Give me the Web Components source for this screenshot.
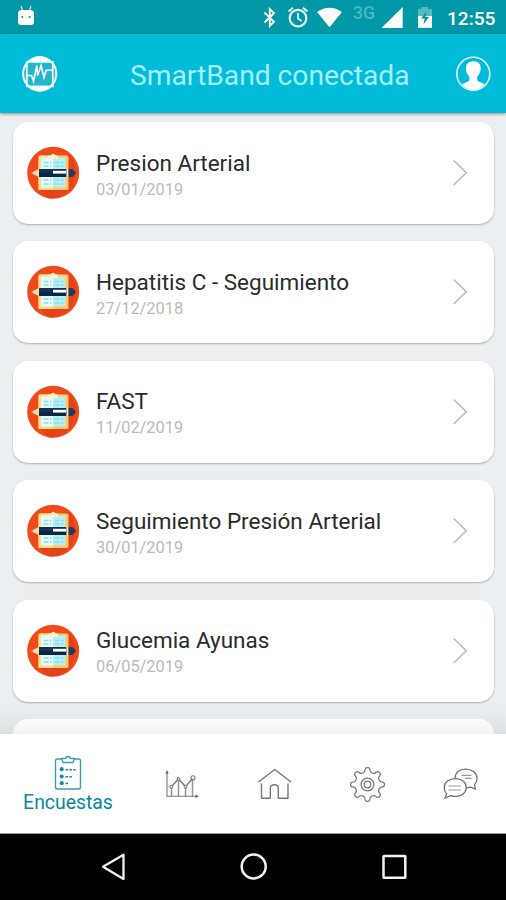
<!DOCTYPE html>
<html lang="es">
<head>
<meta charset="utf-8">
<title>SmartBand</title>
<style>
body{margin:0;font-family:Roboto,"Liberation Sans",sans-serif}
</style>
</head>
<body>
<smart-app></smart-app>
<script>
const define = (name, html) => customElements.define(name, class extends HTMLElement {
  connectedCallback() {
    if (this.shadowRoot) return;
    const t = document.createElement('template');
    t.innerHTML = typeof html === 'function' ? html(this) : html;
    this.attachShadow({mode: 'open'}).append(t.content.cloneNode(true));
  }
});

// Outline of the eight-toothed gear with rounded valleys and teeth
const gearPath = () => {
  const p = (r, deg) => { const a = deg * Math.PI / 180; return (17.5 + r * Math.sin(a)).toFixed(2) + ' ' + (17.5 - r * Math.cos(a)).toFixed(2); };
  let d = '';
  for (let i = 0; i < 8; i++) {
    const a = i * 45;
    d += (i ? 'L' : 'M') + p(13, a - 14) + 'Q' + p(13.6, a - 10) + ' ' + p(15.4, a - 9) + 'Q' + p(17.2, a - 7) + ' ' + p(16.9, a)
      + 'Q' + p(17.2, a + 7) + ' ' + p(15.4, a + 9) + 'Q' + p(13.6, a + 10) + ' ' + p(13, a + 14) + 'Q' + p(11.8, a + 22.5) + ' ' + p(13, a + 31);
  }
  return d + 'Z';
};

const ICONS = {
  android: ['17 5 18 21', `<path d="M21 6l1.8 5M31 6l-1.8 5" stroke="#c5edf1" stroke-width="1.3"/><path d="M18 14q0-4 4-4h8q4 0 4 4v8q0 3-3 3H21q-3 0-3-3Z" fill="#fff"/><circle cx="22.3" cy="17" r="1" fill="#0097a7"/><circle cx="29.6" cy="17" r="1" fill="#0097a7"/>`],
  bluetooth: ['262 6 16 22', `<path d="M264.500 12.500L274 21.800 269.800 26V9L274 13.200 264.500 22.500" fill="none" stroke="#fff" stroke-width="1.9"/>`],
  alarm: ['287 6 22 23', `<circle cx="298" cy="18.200" r="8.300" fill="none" stroke="#e8fafb" stroke-width="2.100"/><path d="M298 13v5.500l3.500 2.500" fill="none" stroke="#e8fafb" stroke-width="1.700"/><path d="M288.500 11.500l4.500-3.700M307.500 11.500L303 7.800" stroke="#e8fafb" stroke-width="2"/>`],
  wifi: ['316 6 28 22', `<path d="M317 12q12.500-8.500 25 0L329.500 27.300Z" fill="#fff"/>`],
  signal: ['381 6 23 23', `<path d="M381.500 28L402.700 7v21Z" fill="#fff"/>`],
  battery: ['416 6 17 23', `<path d="M421.500 7h6.500v2h4v8h-14V9h3.500Z" fill="#58b9c4"/><path d="M418 16h14v11.800h-14Z" fill="#fff"/><path d="M426.500 11.500l-5.300 7h3.500l-1.200 5.800 5.500-7.300h-3.500Z" fill="#078c9b"/>`],
  pulse: ['21 55 38 38', `<circle cx="39.700" cy="73.800" r="16.600" fill="#25b5cb" stroke="#fff" stroke-width="2"/><path d="M27.500 61.500a17 17 0 0 1 24.400 0ZM27.500 86.500a17 17 0 0 0 24.400 0Z" fill="#fff"/><path d="M26.800 61.800h26v24.600h-26Z" fill="none" stroke="#e6fbff" stroke-width="1.800"/><path d="M26.500 75.500h5l2 6 3.300-16 .8 10 3.400-10 3 12 2.200-7.300h7" fill="none" stroke="#fff" stroke-width="1.600"/>`],
  user: ['455 55 37 38', `<circle cx="473.300" cy="73.800" r="16.500" fill="none" stroke="#dff9fd" stroke-width="1.600"/><path d="M473.300 61.300c4.800 0 7.600 2.700 7.400 7.500-.1 3.200-1.500 6-3.500 8v3.400c1.500 2 4.700 2.200 7.400 4.100q-4.500 5.600-11.300 5.600t-11.300-5.600c2.700-1.900 5.900-2.100 7.400-4.100v-3.400c-2-2-3.400-4.800-3.500-8-.2-4.800 2.600-7.500 7.400-7.500Z" fill="#fff"/>`],
  survey: ['26 146 54 54', `<circle cx="53.200" cy="172.800" r="26" fill="#f04a1b"/><path d="M68 154a26 26 0 0 1-19 44.500l-9-9Z" fill="#e2431a"/><rect x="38.500" y="155.500" width="30" height="34.500" rx="1.500" fill="#fbc866"/><path d="M39.500 155.500H53V190H38.500V157Z" fill="#ffdc8a"/><path d="M41 157.500h12v29.800H41Z" fill="#e4fbf9"/><path d="M53 157.500h12.500v29.800H53Z" fill="#b4f0f5"/><path d="M43.500 162.500h8M54.500 162.500h9M43.500 166h8M54.500 166h9M43.500 180h8M54.500 180h9M43.500 184h8M54.500 184h9" stroke="#8bdde8" stroke-width="1.300" stroke-dasharray="5 1.500"/><path d="M48 155.500h2.500q2.700-3.500 5.400 0H58v3.500H48Z" fill="#fff0c8"/><path d="M30.500 173l8.500-4v8Z" fill="#ffd9ae"/><path d="M30.500 173l2-1v2Z" fill="#8b584c"/><path d="M39 169h27.500v8H39Z" fill="#14314f"/><path d="M39 173h27.500v4H39Z" fill="#092642"/><path d="M53 170.800h13v2.800H53Z" fill="#fff"/><path d="M66.500 169h2v8h-2Z" fill="#d8e7e8"/><path d="M68.500 169h4l3.500 4-3.500 4h-4Z" fill="#263b55"/>`],
  chevron: ['451 158 18 30', `<path d="M453.700 160.500l12.600 12.200-12.600 12.300" fill="none" stroke="#b9b9b9" stroke-width="1.500"/>`],
  clipboard: ['53 754 30 37', `<g fill="none" stroke="#3a9faa" stroke-width="1.400"><path d="M61.500 759H57.500q-2 0-2 2v26q0 2 2 2H78.500q2 0 2-2V761q0-2-2-2H74.500"/><path d="M61.500 758.500h4q.500-2 2.500-2t2.500 2h4l-1.500 4h-10Z" stroke-width="1.300"/></g><g fill="#168e9c"><circle cx="61.700" cy="769.200" r="2.100"/><circle cx="61.700" cy="776.500" r="2.100"/><circle cx="61.700" cy="783.200" r="2.100"/></g><path d="M65.500 769.800h11M65.500 776.800h7.500M65.500 783.500h3" stroke="#168e9c" stroke-width="1.600" stroke-dasharray="2.600 1.200"/>`],
  chart: ['164 769 36 30', `<g fill="none" stroke="#777" stroke-width="1.100"><path d="M167 772v24.300h30.500"/><path d="M171.500 788v8M178.500 781v15M185.500 788v8M192.500 780v16" stroke-width="1.500" stroke="#959595"/><path d="M172.500 785.500l5-5.500M179.500 780l5 5.500M186.500 785.500l5.500-6.500" stroke-width="1.400"/><circle cx="171.300" cy="786.700" r="1.400"/><circle cx="178.500" cy="779" r="1.400"/><circle cx="185.500" cy="786.700" r="1.400"/><circle cx="193" cy="777.800" r="2"/></g><path d="M165.300 773.500l1.700-3.500 1.700 3.500ZM195.500 794.500l3.300 1.800-3.300 1.700Z" fill="#666"/>`],
  home: ['257 767 36 34', `<path d="M258.500 782L274.800 769.500 291 782M261.500 783.500v14.700h8.800v-9.500q0-3.900 4-3.900t4 3.900v9.500h9.700v-14.700" fill="none" stroke="#777" stroke-width="1.400" stroke-linejoin="round"/>`],
  gear: ['0 0 35 35', `<g fill="none" stroke="#777" stroke-width="1.250"><path d="${gearPath()}"/><circle cx="17.500" cy="17.500" r="6.400"/><circle cx="17.500" cy="17.500" r="3.300"/></g>`],
  chat: ['442 767 36 34', `<g fill="#fff" stroke="#717171" stroke-width="1.250" stroke-linejoin="round"><path d="M455 778.500c0-6 4.500-9.300 10.700-9.300 6.500 0 11.300 3.800 11.300 9.300 0 2.800-1 4.800-2.500 6.300l1 4.300-5-2q-7 2.200-12-2Z"/><path d="M455.500 778.500c6 0 10.700 3.600 10.700 9s-4.700 8.900-10.700 8.900q-3 0-5-.800l-5.500 2.600 1.500-4.500c-1.500-1.600-2.300-3.600-2.300-6.200 0-5.400 4.700-9 11.300-9Z"/></g><path d="M461.500 775.300h10M465 778.300h6.500M448.500 786h12.500M448.500 790h12.500" stroke="#999" stroke-width="1.150"/>`],
  back: ['100 852 27 30', `<path d="M103 866.700L123.500 854.700v24.200Z" fill="none" stroke="#f2f2f2" stroke-width="2.300" stroke-linejoin="round"/>`],
  circle: ['239 852 30 30', `<circle cx="253.700" cy="866.500" r="12" fill="none" stroke="#f2f2f2" stroke-width="2.500"/>`],
  square: ['380 852 28 30', `<rect x="383.500" y="856" width="21.800" height="21.800" rx=".6" fill="none" stroke="#f2f2f2" stroke-width="2.500"/>`]
};

define('app-icon', el => {
  const [vb, body] = ICONS[el.getAttribute('name')];
  const [, , w, h] = vb.split(' ');
  return `<style>:host{display:block;flex:none;width:${w}px;height:${h}px}svg{display:block}</style><svg width="${w}" height="${h}" viewBox="${vb}">${body}</svg>`;
});

define('status-bar', `<style>
:host{display:flex;box-sizing:border-box;height:34px;padding:6px 10px 0 17px;background:#0097a7;color:#fff;align-items:flex-start}
.fill{flex:1}
.net{width:24px;margin:-2px 4px 0 9px;font:500 17.500px/18px Roboto,sans-serif;color:#4fb7c3}
.time{width:49px;margin:1px 0 0 14px;font:500 19.100px/23px Roboto,sans-serif;white-space:nowrap}
app-icon[name=android]{margin-top:-1px}
app-icon[name=alarm]{margin-left:9px}
app-icon[name=wifi]{margin-left:7px}
app-icon[name=battery]{margin-left:12px}
</style><app-icon name="android"></app-icon><span class="fill"></span><app-icon name="bluetooth"></app-icon><app-icon name="alarm"></app-icon><app-icon name="wifi"></app-icon><span class="net">3G</span><app-icon name="signal"></app-icon><app-icon name="battery"></app-icon><span class="time">12:55</span>`);

define('app-header', `<style>
:host{display:flex;box-sizing:border-box;height:79px;padding:0 14px 0 21px;background:#00bcd8;align-items:center;box-shadow:0 1px 3px rgba(70,45,35,.5);z-index:1;position:relative}
.title{flex:1;padding:4px 0 0 71px;font-size:28.200px;line-height:34px;color:#a5effa;white-space:nowrap}
</style><app-icon name="pulse"></app-icon><span class="title"><slot></slot></span><app-icon name="user"></app-icon>`);

define('survey-card', `<style>
:host{display:flex;flex:none;box-sizing:border-box;height:102px;padding:0 25px 0 13px;border-radius:15px;background:#fff;box-shadow:0 1px 2px rgba(0,0,0,.28);align-items:center}
.text{flex:1;padding:4px 0 0 16px}
.name{font-size:22.500px;line-height:28px;color:#2b2b2b;white-space:nowrap}
.date{font-size:16.400px;line-height:25px;color:#bababa}
</style><app-icon name="survey"></app-icon><div class="text"><div class="name"><slot></slot></div><div class="date"><slot name="date"></slot></div></div><app-icon name="chevron"></app-icon>`);

define('survey-list', `<style>
:host{display:flex;flex-direction:column;gap:17.400px;box-sizing:border-box;height:621px;padding:9px 12px 0 13px;background:linear-gradient(transparent 585px,rgba(90,90,90,.06)),#eceff1;overflow:hidden}
</style><slot></slot>`);

define('nav-tab', el => `<style>
:host{display:flex;flex-direction:column;align-items:center;color:#078b99;font-size:19.400px;line-height:24px}
slot{display:block}
</style><app-icon name="${el.getAttribute('icon')}"></app-icon><slot></slot>`);

define('tab-bar', `<style>
:host{display:grid;grid-template-columns:136px 92px 93px 93px 91px;box-sizing:border-box;height:100px;padding-top:1px;align-items:center;background:#fff;border-bottom:1px solid #999;box-shadow:0 -3px 20px rgba(0,0,0,.07);position:relative}
</style><slot></slot>`);

define('system-nav', `<style>
:host{display:flex;box-sizing:border-box;height:66px;padding:0 98px 0 100px;background:#000;align-items:center;justify-content:space-between}
</style><app-icon name="back"></app-icon><app-icon name="circle"></app-icon><app-icon name="square"></app-icon>`);

const surveys = [['Presion Arterial','03/01/2019'],['Hepatitis C - Seguimiento','27/12/2018'],['FAST','11/02/2019'],['Seguimiento Presión Arterial','30/01/2019'],['Glucemia Ayunas','06/05/2019']];
define('smart-app', `<style>
:host{display:flex;flex-direction:column;width:506px;height:900px;overflow:hidden}
status-bar,app-header,survey-list,tab-bar,system-nav{flex:none}
.next{flex:none;height:102px;border-radius:15px;background:#fdfdfd}
</style><status-bar></status-bar><app-header>SmartBand conectada</app-header><survey-list>${surveys.map(([n, d]) => `<survey-card>${n}<span slot="date">${d}</span></survey-card>`).join('')}<div class="next"></div></survey-list><tab-bar><nav-tab icon="clipboard">Encuestas</nav-tab><nav-tab icon="chart"></nav-tab><nav-tab icon="home"></nav-tab><nav-tab icon="gear"></nav-tab><nav-tab icon="chat"></nav-tab></tab-bar><system-nav></system-nav>`);
</script>
</body>
</html>
